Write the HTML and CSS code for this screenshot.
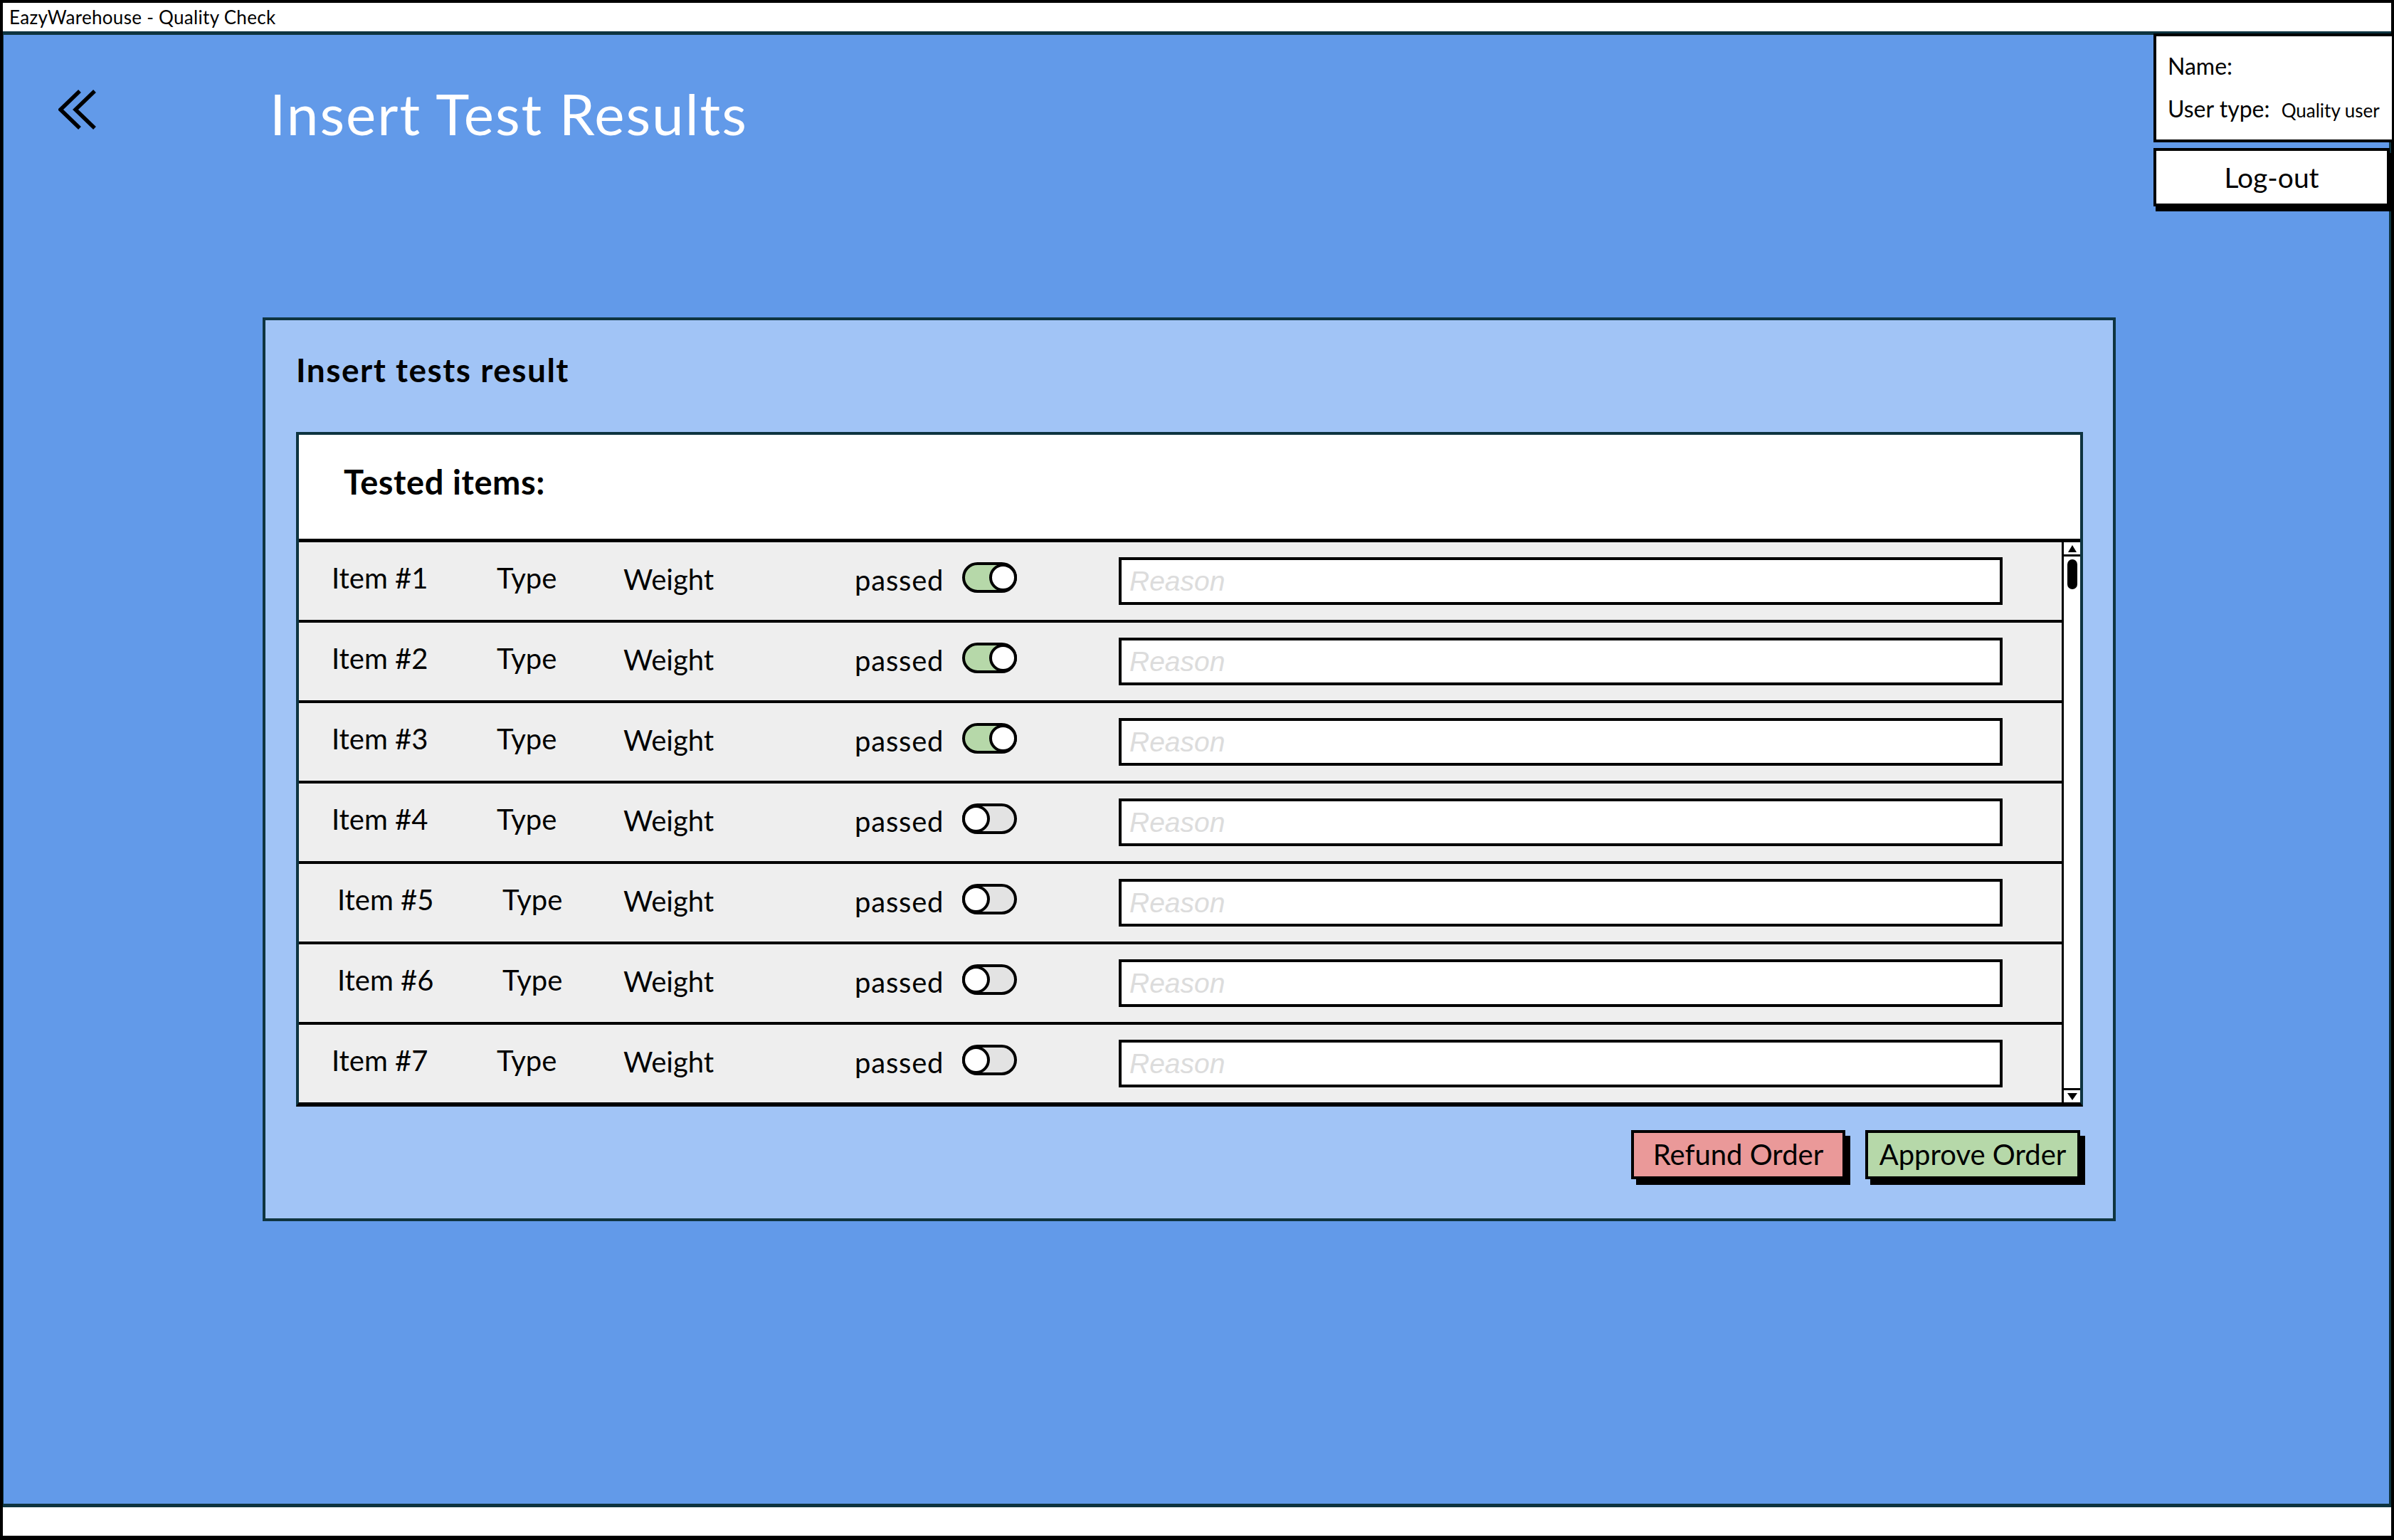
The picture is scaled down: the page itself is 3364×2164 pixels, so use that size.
FILE: index.html
```html
<!DOCTYPE html>
<html lang="en">
<head>
<meta charset="utf-8">
<title>EazyWarehouse - Quality Check</title>
<link rel="stylesheet" href="styles.css">
</head>
<body>
<div class="app">
  <div class="titlebar">EazyWarehouse - Quality Check</div>
  <main class="main">
    <header class="topbar">
      <button class="back" aria-label="Back">
        <svg width="56" height="56" viewBox="0 0 56 56"><path d="M30 2 L3 28 L30 54 M51 2 L24 28 L51 54" fill="none" stroke="#000" stroke-width="5.5" stroke-linejoin="miter"/></svg>
      </button>
      <h1 class="page-title">Insert Test Results</h1>
      <div class="user">
        <div class="user-info">
          <div class="user-line">Name:</div>
          <div class="user-line user-line--second">User type: <span class="user-type">Quality user</span></div>
        </div>
        <div class="logout">Log-out</div>
      </div>
    </header>

    <section class="panel">
      <h2 class="panel-title">Insert tests result</h2>
      <div class="list">
        <div class="list-head">Tested items:</div>
        <div class="list-body">
          <div class="rows">
            <div class="row">
              <span class="c-item">Item #1</span><span class="c-type">Type</span><span class="c-weight">Weight</span><span class="c-passed">passed</span>
              <span class="toggle toggle--on"><span class="knob"></span></span>
              <input class="reason" type="text" placeholder="Reason">
            </div>
            <div class="row">
              <span class="c-item">Item #2</span><span class="c-type">Type</span><span class="c-weight">Weight</span><span class="c-passed">passed</span>
              <span class="toggle toggle--on"><span class="knob"></span></span>
              <input class="reason" type="text" placeholder="Reason">
            </div>
            <div class="row">
              <span class="c-item">Item #3</span><span class="c-type">Type</span><span class="c-weight">Weight</span><span class="c-passed">passed</span>
              <span class="toggle toggle--on"><span class="knob"></span></span>
              <input class="reason" type="text" placeholder="Reason">
            </div>
            <div class="row">
              <span class="c-item">Item #4</span><span class="c-type">Type</span><span class="c-weight">Weight</span><span class="c-passed">passed</span>
              <span class="toggle toggle--off"><span class="knob"></span></span>
              <input class="reason" type="text" placeholder="Reason">
            </div>
            <div class="row row--shift">
              <span class="c-item">Item #5</span><span class="c-type">Type</span><span class="c-weight">Weight</span><span class="c-passed">passed</span>
              <span class="toggle toggle--off"><span class="knob"></span></span>
              <input class="reason" type="text" placeholder="Reason">
            </div>
            <div class="row row--shift">
              <span class="c-item">Item #6</span><span class="c-type">Type</span><span class="c-weight">Weight</span><span class="c-passed">passed</span>
              <span class="toggle toggle--off"><span class="knob"></span></span>
              <input class="reason" type="text" placeholder="Reason">
            </div>
            <div class="row">
              <span class="c-item">Item #7</span><span class="c-type">Type</span><span class="c-weight">Weight</span><span class="c-passed">passed</span>
              <span class="toggle toggle--off"><span class="knob"></span></span>
              <input class="reason" type="text" placeholder="Reason">
            </div>
          </div>
          <div class="scrollbar">
            <div class="sb-up"><span class="tri-up"></span></div>
            <div class="sb-thumb"></div>
            <div class="sb-track"></div>
            <div class="sb-down"><span class="tri-down"></span></div>
          </div>
        </div>
      </div>
      <div class="actions">
        <button class="btn btn-refund">Refund Order</button>
        <button class="btn btn-approve">Approve Order</button>
      </div>
    </section>
  </main>
  <div class="footer"></div>
</div>
</body>
</html>
```

FILE: styles.css
```css
* {
  box-sizing: border-box;
  margin: 0;
  padding: 0;
}

html, body {
  width: 3364px;
  height: 2164px;
  overflow: hidden;
  background: #ffffff;
}

body {
  font-family: Lato, "Noto Sans", sans-serif;
  color: #000;
}

.app {
  width: 3364px;
  height: 2164px;
  display: flex;
  flex-direction: column;
  border-style: solid;
  border-color: #000;
  border-width: 4px 4px 6px 4px;
}

.titlebar {
  height: 40px;
  flex: none;
  background: #fff;
  font-size: 26px;
  line-height: 40px;
  letter-spacing: 0.3px;
  padding-left: 9px;
}

.main {
  flex: 1;
  background: #629ae9;
  border-top: 5px solid #0e3440;
  border-bottom: 5px solid #0e3440;
  border-right: 3px solid #0e3440;
  border-left: 1px solid #0e3440;
}

.topbar {
  display: flex;
  align-items: flex-start;
  height: 248px;
}

.back {
  flex: none;
  width: 56px;
  height: 56px;
  margin: 77px 0 0 77px;
  background: none;
  border: 0;
  display: block;
}

.back svg {
  display: block;
}

.page-title {
  margin: 70px 0 0 241px;
  font-size: 80px;
  line-height: 80px;
  font-weight: 400;
  letter-spacing: 2px;
  color: #fff;
}

.user {
  margin-left: auto;
  margin-top: -2px;
  margin-right: -8px;
  width: 339px;
  display: flex;
  flex-direction: column;
  align-items: flex-start;
}

.user-info {
  width: 339px;
  height: 153px;
  background: #fff;
  border: 4px solid #000;
  padding: 26px 0 0 16px;
}

.user-line {
  font-size: 32px;
  line-height: 32px;
  white-space: nowrap;
}

.user-line--second {
  margin-top: 28px;
}

.user-type {
  font-size: 26px;
  margin-left: 8px;
}

.logout {
  margin-top: 8px;
  width: 332px;
  height: 82px;
  background: #fff;
  border: 4px solid #000;
  box-shadow: 3px 7px 0 #000;
  font-size: 39px;
  line-height: 74px;
  text-align: center;
}

.panel {
  margin: 149px 0 0 364px;
  width: 2604px;
  height: 1270px;
  background: #a1c4f6;
  border: 4px solid #0e3440;
  padding: 47px 42px 0 43px;
}

.panel-title {
  font-size: 46px;
  line-height: 45px;
  font-weight: 700;
  letter-spacing: 1.5px;
  margin-left: 0;
}

.list {
  margin-top: 65px;
  background: #fff;
  border: 4px solid #0e3440;
  border-bottom: 6px solid #000;
}

.list-head {
  height: 146px;
  padding: 43px 0 0 63px;
  font-size: 47px;
  line-height: 47px;
  font-weight: 700;
  letter-spacing: 0.6px;
}

.list-body {
  display: flex;
  border-top: 5px solid #000;
}

.rows {
  flex: 1;
}

.row {
  height: 113px;
  display: flex;
  align-items: center;
  background: #eeeeee;
  border-bottom: 4px solid #000;
  padding-left: 46px;
  font-size: 40px;
  line-height: 40px;
}

.row:last-child {
  border-bottom: 0;
  height: 109px;
}

.c-item, .c-type, .c-weight, .c-passed {
  flex: none;
  display: block;
  white-space: nowrap;
  margin-bottom: 10px;
}

.c-item { width: 232px; }
.c-type { width: 178px; }
.c-weight { width: 325px; margin-bottom: 6px; }
.c-passed { width: 151px; margin-bottom: 4px; letter-spacing: 0.8px; }

.row--shift .c-item,
.row--shift .c-type {
  padding-left: 8px;
}

.toggle {
  flex: none;
  width: 77px;
  height: 43px;
  border: 4px solid #000;
  border-radius: 22px;
  display: flex;
  align-items: center;
  margin-bottom: 11px;
  margin-right: 143px;
}

.toggle--on {
  background: #b6d8a9;
  justify-content: flex-end;
}

.toggle--off {
  background: #e3e3e3;
  justify-content: flex-start;
}

.knob {
  flex: none;
  width: 39px;
  height: 39px;
  border: 4px solid #000;
  border-radius: 50%;
  background: #fff;
}

.toggle--on .knob { margin-right: -4px; }
.toggle--off .knob { margin-left: -4px; }

.reason {
  flex: none;
  width: 1242px;
  height: 67px;
  border: 4px solid #000;
  background: #fff;
  padding-left: 11px;
  font-family: "Liberation Sans", Arial, sans-serif;
  font-style: italic;
  font-size: 39px;
  color: #333;
  outline: none;
}

.reason::placeholder {
  color: #dcdcdc;
  opacity: 1;
}

.scrollbar {
  flex: none;
  width: 26px;
  background: #fff;
  border-left: 3px solid #000;
  display: flex;
  flex-direction: column;
  align-items: center;
}

.sb-up, .sb-down {
  width: 100%;
  height: 20px;
  display: flex;
  align-items: center;
  justify-content: center;
}

.sb-up { border-bottom: 3px solid #000; }
.sb-down { border-top: 3px solid #000; }

.tri-up {
  width: 0;
  height: 0;
  border-left: 6px solid transparent;
  border-right: 6px solid transparent;
  border-bottom: 10px solid #000;
}

.tri-down {
  width: 0;
  height: 0;
  border-left: 7px solid transparent;
  border-right: 7px solid transparent;
  border-top: 10px solid #000;
}

.sb-thumb {
  margin-top: 4px;
  width: 14px;
  height: 42px;
  background: #000;
  border-radius: 7px;
}

.sb-track {
  flex: 1;
}

.actions {
  display: flex;
  justify-content: flex-end;
  gap: 28px;
  margin-top: 33px;
  padding-right: 4px;
}

.btn {
  height: 69px;
  border: 4px solid #000;
  box-shadow: 7px 8px 0 #000;
  font-family: Lato, "Noto Sans", sans-serif;
  font-size: 40px;
  line-height: 61px;
  color: #000;
  text-align: center;
}

.btn-refund {
  width: 301px;
  background: #ea9999;
}

.btn-approve {
  width: 302px;
  background: #b6d8a9;
}

.footer {
  height: 40px;
  flex: none;
  background: #fff;
}
```
